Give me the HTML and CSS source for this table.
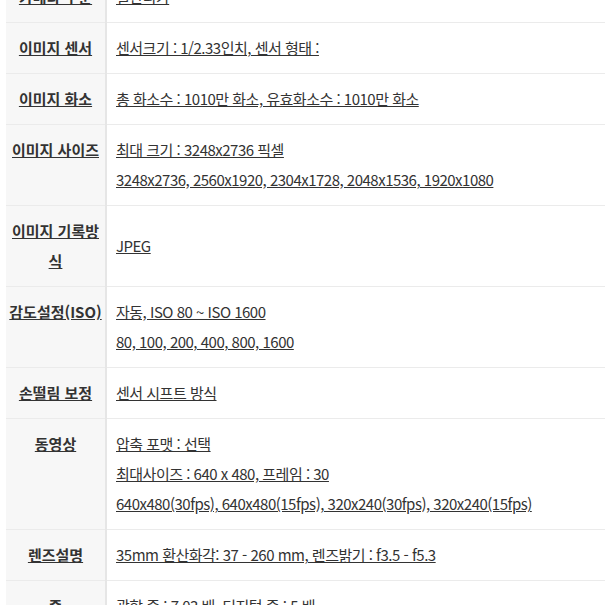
FILE: index.html
```html
<!DOCTYPE html>
<html lang="ko">
<head>
<meta charset="utf-8">
<link rel="stylesheet" href="styles.css">
</head>
<body>
<div class="wrap">
<table class="spec">
<tr><th><a>카메라 구분</a></th><td><a>일반디카</a></td></tr>
<tr><th><a>이미지 센서</a></th><td><a>센서크기 : 1/2.33인치, 센서 형태 :</a></td></tr>
<tr><th><a>이미지 화소</a></th><td><a>총 화소수 : 1010만 화소, 유효화소수 : 1010만 화소</a></td></tr>
<tr><th><a>이미지 사이즈</a></th><td><a>최대 크기 : 3248x2736 픽셀</a><br><a>3248x2736, 2560x1920, 2304x1728, 2048x1536, 1920x1080</a></td></tr>
<tr><th><a>이미지 기록방식</a></th><td><a>JPEG</a></td></tr>
<tr><th><a>감도설정(ISO)</a></th><td><a>자동, ISO 80 ~ ISO 1600</a><br><a>80, 100, 200, 400, 800, 1600</a></td></tr>
<tr><th><a>손떨림 보정</a></th><td><a>센서 시프트 방식</a></td></tr>
<tr><th><a>동영상</a></th><td><a>압축 포맷 : 선택</a><br><a>최대사이즈 : 640 x 480, 프레임 : 30</a><br><a>640x480(30fps), 640x480(15fps), 320x240(30fps), 320x240(15fps)</a></td></tr>
<tr><th><a>렌즈설명</a></th><td><a>35mm 환산화각: 37 - 260 mm, 렌즈밝기 : f3.5 - f5.3</a></td></tr>
<tr><th><a>줌</a></th><td><a>광학 줌 : 7.03 배, 디지털 줌 : 5 배</a></td></tr>
</table>
</div>
</body>
</html>
```
FILE: styles.css
```css
html, body {
  margin: 0;
  padding: 0;
  background: #fff;
}
body {
  font-family: "Noto Sans CJK KR", "Noto Sans", sans-serif;
  color: #333;
}
.wrap {
  padding-left: 6px;
  margin-top: -28px;
}
.spec {
  border-collapse: collapse;
  width: 600px;
}
.spec th, .spec td {
  border-bottom: 1px solid #ebebeb;
  padding: 10px 0;
  line-height: 30px;
}
.spec th {
  width: 99px;
  background: #f7f7f7;
  border-right: 2px solid #e6e6e6;
  vertical-align: top;
  text-align: center;
  font-weight: bold;
  font-size: 15px;
}
.spec td {
  padding-left: 9px;
  vertical-align: middle;
  text-align: left;
  font-size: 15px;
  letter-spacing: -0.5px;
}
.spec a {
  color: #333;
  text-decoration: underline;
}
```
